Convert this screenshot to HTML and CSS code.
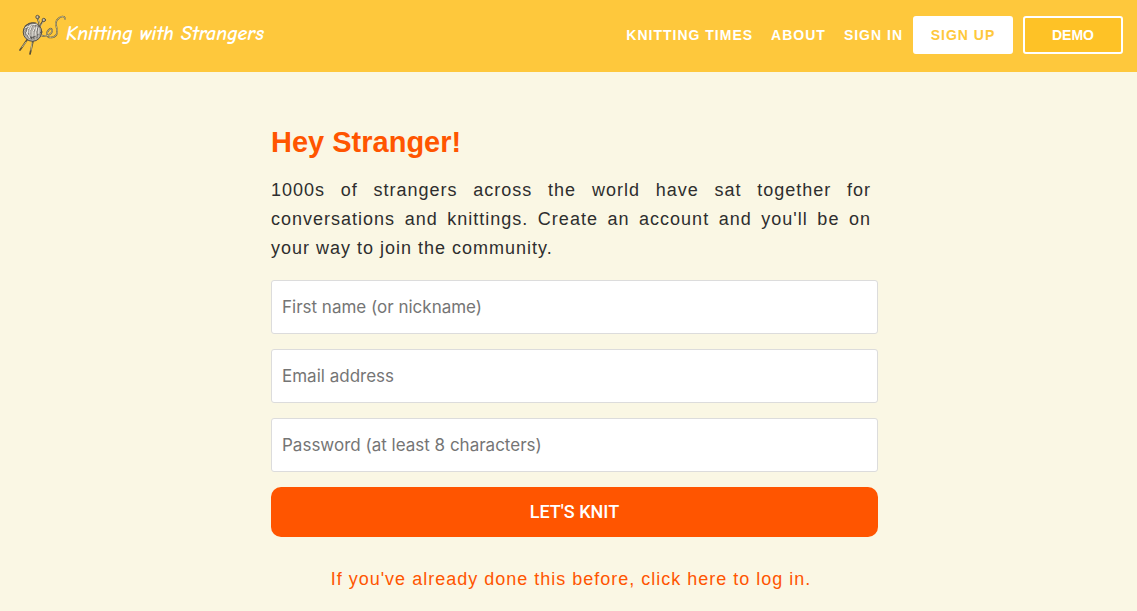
FILE: index.html
```html
<!DOCTYPE html>
<html lang="en">
<head>
<meta charset="utf-8">
<meta name="viewport" content="width=device-width, initial-scale=1">
<title>Knitting with Strangers</title>
<link rel="stylesheet" href="styles.css">
</head>
<body>
<header class="site-header">
  <a class="brand" href="#">
    <svg class="brand-icon" viewBox="0 0 48 42" fill="none" stroke-linecap="round" aria-hidden="true">
      <g stroke="#5a5036" stroke-width="1.7">
        <path d="M19.500 4l2.500 8M25 7l-3 5M9 26L2 36M15 27l-3 13"/>
      </g>
      <g stroke="#e9dcae" stroke-width=".7">
        <path d="M20 5l2 6M25 8l-2 4M8 28L4 33M14 29l-1 7"/>
      </g>
      <circle cx="19.500" cy="3" r="1.700" fill="#c9bfa4" stroke="#494339" stroke-width=".8"/>
      <circle cx="25.800" cy="6" r="1.700" fill="#c9bfa4" stroke="#494339" stroke-width=".8"/>
      <circle cx="14.500" cy="18" r="9.300" fill="#b4b1aa" stroke="#514d47"/>
      <g stroke="#4b4946" stroke-width=".8">
        <path d="M6 15q7-5 14-5M7 12q7-4 11-3M8 21q-1-6 3-10M10 23q-2-7 3-12M13 25q-3-7 2-14M16 25q-2-6 2-14M19 24q-1-6 1-12M22 21q0-5-1-9M11 24q6 0 12-6M7 18q5 1 7 7"/>
      </g>
      <g stroke="#f5f2ea" stroke-width="1">
        <path d="M7 14q6-4 12-4M9 20q0-5 3-8M12 22q-1-6 2-10M15 22q-1-5 2-9M18 22q-1-4 1-9M21 20v-6M8 18l4 6"/>
      </g>
      <path d="M23 21c4 3 12-1 11-5-1-4-6 2-5 5 1 4 9 3 10-2 1-5-3-9 0-13s8-5 8-1" stroke="#675c3b" stroke-width="1.600"/>
      <path d="M23 21c4 3 12-1 11-5-1-4-6 2-5 5 1 4 9 3 10-2 1-5-3-9 0-13s8-5 8-1" stroke="#e3d5a0" stroke-width=".7" stroke-dasharray="2 1"/>
    </svg>
    <span class="brand-name">Knitting with Strangers</span>
  </a>
  <nav class="site-nav">
    <a class="nav-link" href="#">KNITTING TIMES</a>
    <a class="nav-link" href="#">ABOUT</a>
    <a class="nav-link" href="#">SIGN IN</a>
    <div class="nav-actions">
      <a class="nav-button nav-button-solid" href="#">SIGN UP</a>
      <button class="nav-button nav-button-outline" type="button">DEMO</button>
    </div>
  </nav>
</header>
<main class="page">
  <section class="signup">
    <h1 class="title">Hey Stranger!</h1>
    <p class="intro">1000s of strangers across the world have sat together for conversations and knittings. Create an account and you'll be on your way to join the community.</p>
    <form class="signup-form">
      <input class="field" type="text" aria-label="First name (or nickname)" placeholder="First name (or nickname)">
      <input class="field" type="email" aria-label="Email address" placeholder="Email address">
      <input class="field" type="password" aria-label="Password (at least 8 characters)" placeholder="Password (at least 8 characters)">
      <button class="submit" type="submit">LET'S KNIT</button>
    </form>
    <p class="login"><a class="login-link" href="#">If you've already done this before, click here to log in.</a></p>
  </section>
</main>
</body>
</html>
```
FILE: styles.css
```css
* {
  box-sizing: border-box;
}

body {
  margin: 0;
  background: #faf7e4;
  color: #2e2e2e;
  font-family: "Liberation Sans", Arial, sans-serif;
}

.site-header {
  display: flex;
  align-items: center;
  justify-content: space-between;
  padding: 14px 14px 16px 18px;
  background: #fec83c;
}

.brand {
  display: flex;
  align-items: center;
  color: #fff;
  text-decoration: none;
}

.brand-icon {
  width: 48px;
  height: 42px;
}

.brand-name {
  padding-bottom: 2px;
  font-family: "Comic Neue", "Lato", cursive;
  font-size: 20px;
  font-style: italic;
  font-weight: 700;
  line-height: 24px;
}

.site-nav {
  display: flex;
  align-items: center;
  gap: 18px;
}

.nav-link,
.nav-button {
  font-family: inherit;
  font-size: 14px;
  font-weight: 700;
  line-height: 16px;
  text-decoration: none;
}

.nav-link {
  color: #fff;
  letter-spacing: 1px;
}

.nav-actions {
  display: flex;
  gap: 10px;
  margin-left: -8px;
}

.nav-button {
  width: 100px;
  padding: 9px 0;
  border: 2px solid #fff;
  border-radius: 3px;
  text-align: center;
}

.nav-button-solid {
  background: #fff;
  color: #fec83c;
  letter-spacing: 1px;
}

.nav-button-outline {
  background: #fec226;
  color: #fff;
}

.page {
  padding: 54px 0 16px 12px;
}

.signup {
  max-width: 607px;
  margin: 0 auto;
}

.title {
  margin: 0;
  color: #ff5500;
  font-size: 29px;
  line-height: 32px;
}

.intro,
.login {
  max-width: 600px;
  font-size: 18px;
  line-height: 29px;
  letter-spacing: 1px;
}

.intro {
  margin: 18px 0 17px;
  text-align: justify;
}

.signup-form {
  display: grid;
  gap: 15px;
}

.field {
  width: 100%;
  height: 54px;
  padding: 0 10px;
  border: 1px solid #dcdcdc;
  border-radius: 3px;
  background: #fff;
  font-family: "Inter", sans-serif;
  font-size: 17px;
}

.field::placeholder {
  color: #757575;
}

.submit {
  height: 50px;
  padding: 0 0 2px;
  border: 0;
  border-radius: 10px;
  background: #ff5500;
  color: #fff;
  font-family: "Roboto", sans-serif;
  font-size: 18px;
  font-weight: 500;
}

.login {
  margin: 28px 0 0;
  text-align: center;
}

.login-link {
  color: #ff5500;
  text-decoration: none;
}
```
